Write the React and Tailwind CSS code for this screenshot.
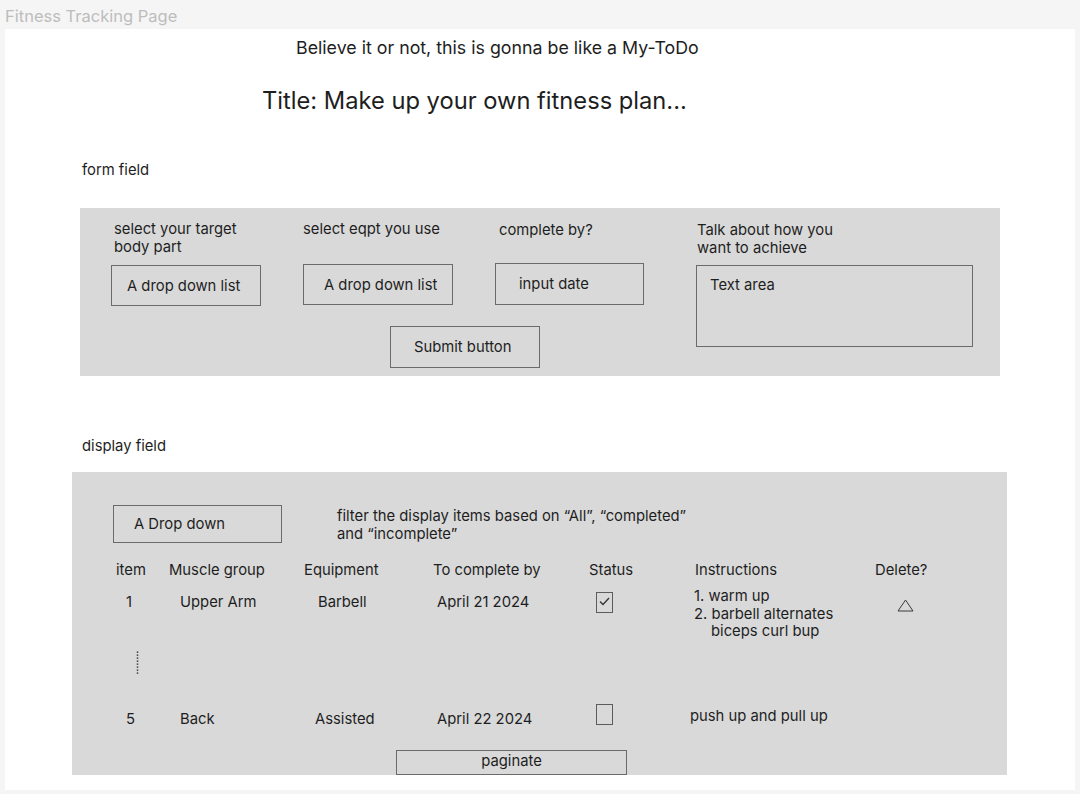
const box = "border border-[#6b6b6b] flex items-center";

const Check = ({ checked }) => (
  <div className="w-[17px] h-[21px] border border-[#5c5c5c] flex items-start justify-center pt-[4px]">
    {checked && (
      <svg width="11" height="9" viewBox="0 0 11 9" fill="none">
        <path d="M1 4.5 L4 7.5 L10 1" stroke="#333" strokeWidth="1.3" />
      </svg>
    )}
  </div>
);

const App = () => {
  return (
    <div className="min-h-screen bg-[#f5f5f5] font-['Inter',sans-serif] text-[#1e1e1e]">
      <div className="h-[29px] pt-[6px] pl-[5px] text-[16.5px] leading-[20px] text-[#bdbdbd]">Fitness Tracking Page</div>

      <div className="ml-[5px] w-[1070px] h-[761px] bg-white">
        <p className="pt-[8px] ml-[291px] text-[17.8px] leading-[22px]">Believe it or not, this is gonna be like a My-ToDo</p>
        <h1 className="mt-[27px] ml-[257px] text-[23.7px] leading-[30px]">Title: Make up your own fitness plan...</h1>

        {/* form field */}
        <div className="text-[14.8px] leading-[18px]">
          <p className="mt-[45px] ml-[77px]">form field</p>
          <div className="mt-[29px] ml-[75px] w-[920px] h-[168px] bg-[#d9d9d9] flex pt-[12px]">
            <div className="pl-[31px] flex flex-col">
              <div className="flex">
                <div className="w-[150px]">
                  <p className="h-[36px] pl-[3px]">select your target<br />body part</p>
                  <div className={`${box} mt-[9px] h-[41px] pl-[15px]`}>A drop down list</div>
                </div>
                <div className="w-[150px] ml-[42px]">
                  <p className="h-[36px]">select eqpt you use</p>
                  <div className={`${box} mt-[8px] h-[41px] pl-[20px]`}>A drop down list</div>
                </div>
                <div className="w-[149px] ml-[42px]">
                  <p className="h-[36px] pt-[1px] pl-[4px]">complete by?</p>
                  <div className={`${box} mt-[7px] h-[42px] pl-[23px]`}>input date</div>
                </div>
              </div>
              <button className={`${box} mt-[20px] ml-[279px] w-[150px] h-[42px] pl-[23px]`}>Submit button</button>
            </div>
            <div className="ml-[52px]">
              <p className="h-[37px] pt-[1px] pl-[1px]">Talk about how you<br />want to achieve</p>
              <div className="mt-[8px] w-[277px] h-[82px] border border-[#6b6b6b] pt-[10px] pl-[13px]">Text area</div>
            </div>
          </div>

          {/* display field */}
          <p className="mt-[61px] ml-[77px]">display field</p>
          <div className="mt-[17px] ml-[67px] w-[935px] h-[303px] bg-[#d9d9d9] pt-[33px]">
            <div className="flex pl-[41px]">
              <div className={`${box} w-[169px] h-[38px] pl-[20px]`}>A Drop down</div>
              <p className="ml-[55px] mt-[2px]">filter the display items based on “All”, “completed”<br />and “incomplete”</p>
            </div>

            <div className="flex mt-[18px] pl-[44px]">
              <span className="w-[53px]">item</span>
              <span className="w-[135px]">Muscle group</span>
              <span className="w-[129px]">Equipment</span>
              <span className="w-[156px]">To complete by</span>
              <span className="w-[106px]">Status</span>
              <span className="w-[180px]">Instructions</span>
              <span>Delete?</span>
            </div>

            <div className="flex items-start mt-[9px] h-[63px] pl-[54px]">
              <span className="w-[54px] mt-[5px]">1</span>
              <span className="w-[138px] mt-[5px]">Upper Arm</span>
              <span className="w-[119px] mt-[5px]">Barbell</span>
              <span className="w-[159px] mt-[5px]">April 21 2024</span>
              <div className="w-[98px] mt-[4px]"><Check checked /></div>
              <div className="w-[203px] leading-[17.5px]">
                <p>1. warm up</p>
                <p>2. barbell alternates</p>
                <p className="pl-[17px]">biceps curl bup</p>
              </div>
              <svg className="mt-[11px]" width="17" height="13" viewBox="0 0 17 13" fill="none">
                <path d="M8.5 1 L16 12 L1 12 Z" stroke="#3a3a3a" strokeWidth="1" strokeLinejoin="miter" />
              </svg>
            </div>

            <svg className="ml-[64px]" width="3" height="23" viewBox="0 0 3 23">
              <line x1="1.5" y1="0.5" x2="1.5" y2="23" stroke="#222" strokeWidth="1.5" strokeDasharray="1.2 1.8" />
            </svg>

            <div className="flex items-start mt-[30px] h-[21px] pl-[54px]">
              <span className="w-[54px] mt-[6px]">5</span>
              <span className="w-[135px] mt-[6px]">Back</span>
              <span className="w-[122px] mt-[6px]">Assisted</span>
              <span className="w-[159px] mt-[6px]">April 22 2024</span>
              <div className="w-[94px]"><Check /></div>
              <span className="mt-[3px]">push up and pull up</span>
            </div>

            <div className="mt-[25px] ml-[324px] w-[231px] h-[25px] border border-[#6b6b6b] flex items-start justify-center pt-[1px]">paginate</div>
          </div>
        </div>
      </div>
    </div>
  );
};

export default App;
